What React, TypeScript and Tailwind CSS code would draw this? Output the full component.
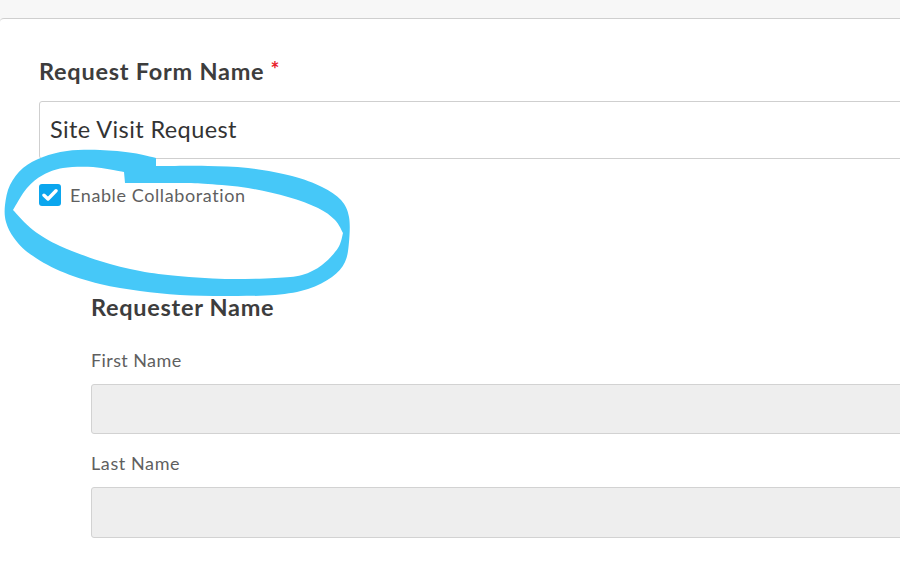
type P = [number, number];

const smooth = (pts: P[]) => {
  let d = "";
  for (let i = 0; i < pts.length - 1; i++) {
    const p0 = pts[Math.max(i - 1, 0)];
    const p1 = pts[i];
    const p2 = pts[i + 1];
    const p3 = pts[Math.min(i + 2, pts.length - 1)];
    const c1 = [p1[0] + (p2[0] - p0[0]) / 6, p1[1] + (p2[1] - p0[1]) / 6];
    const c2 = [p2[0] - (p3[0] - p1[0]) / 6, p2[1] - (p3[1] - p1[1]) / 6];
    d += ` C${c1[0].toFixed(1)} ${c1[1].toFixed(1)} ${c2[0].toFixed(1)} ${c2[1].toFixed(1)} ${p2[0]} ${p2[1]}`;
  }
  return d;
};

const outer: P[] = [
  [156, 158], [133, 153], [100, 150], [67, 151], [43, 157], [23, 168], [10, 185], [5, 205], [6, 222], [14, 238],
  [30, 254], [60, 271], [100, 284], [140, 291], [180, 295], [225, 296], [275, 295], [308, 289], [332, 277],
  [345, 262], [349, 242], [349, 217], [341, 200], [322, 187], [292, 176], [248, 168], [208, 166], [175, 166], [156, 166],
];
const innerRight: P[] = [
  [125, 183], [180, 183], [208, 184], [248, 188], [288, 197], [318, 208], [335, 220], [343, 233],
];
const innerBottom: P[] = [
  [343, 233], [338, 248], [322, 265], [302, 275], [275, 278], [225, 279], [178, 276], [140, 271], [100, 261],
  [60, 246], [33, 230], [13, 210],
];
const innerTop: P[] = [[13, 210], [27, 188], [43, 175], [63, 168], [93, 167], [124, 172]];

const stroke =
  `M156 158${smooth(outer)} Z ` +
  `M125 183${smooth(innerRight)}${smooth(innerBottom)}${smooth(innerTop)} L125 183 Z`;

export default function App() {
  return (
    <div className="relative h-[563px] w-[900px] overflow-hidden bg-[#f7f7f7] font-['Lato',sans-serif]">
      <div className="mt-[18px] h-[545px] rounded-tl-[4px] border-t border-[#cfcfcf] bg-white pl-[39px] pt-[38px]">
        <div className="flex h-[30px] items-center text-[23.5px] font-bold tracking-[0.75px] text-[#3d3d3d]">
          Request Form Name
          <span className="ml-[6px] -mt-[6px] text-[21px] text-[#e8202a]">*</span>
        </div>
        <div className="mt-[14px] flex h-[58px] w-[900px] items-center rounded-[3px] border border-[#cfcfcf] pl-[10px] text-[23.5px] tracking-[0.4px] text-[#333]">
          Site Visit Request
        </div>
        <div className="mt-[25px] flex h-[22px] items-center gap-[9px]">
          <div className="flex h-[22px] w-[22px] items-center justify-center rounded-[3px] bg-[#0ba6ee]">
            <svg width="16" height="14" viewBox="0 0 16 14" fill="none">
              <path d="M2 7.2 L6 11 L14 2.8" stroke="white" strokeWidth="3.4" strokeLinecap="round" strokeLinejoin="round" />
            </svg>
          </div>
          <span className="text-[18px] tracking-[0.6px] text-[#5f5f5f]">Enable Collaboration</span>
        </div>
        <div className="ml-[52px] mt-[88px]">
          <div className="flex h-[28px] items-center text-[23.5px] font-bold tracking-[0.7px] text-[#3d3d3d]">Requester Name</div>
          <div className="mt-[27px] flex h-[22px] items-center text-[18px] tracking-[0.4px] text-[#5f5f5f]">First Name</div>
          <div className="mt-[13px] h-[50px] w-[900px] rounded-[3px] border border-[#d2d2d2] bg-[#eeeeee]" />
          <div className="mt-[18px] flex h-[22px] items-center text-[18px] tracking-[0.6px] text-[#5f5f5f]">Last Name</div>
          <div className="mt-[13px] h-[51px] w-[900px] rounded-[3px] border border-[#d2d2d2] bg-[#eeeeee]" />
        </div>
      </div>
      <svg className="pointer-events-none absolute left-0 top-0" width="900" height="563" viewBox="0 0 900 563">
        <path fill="#46c8f8" fillRule="evenodd" d={stroke} />
      </svg>
    </div>
  );
}
